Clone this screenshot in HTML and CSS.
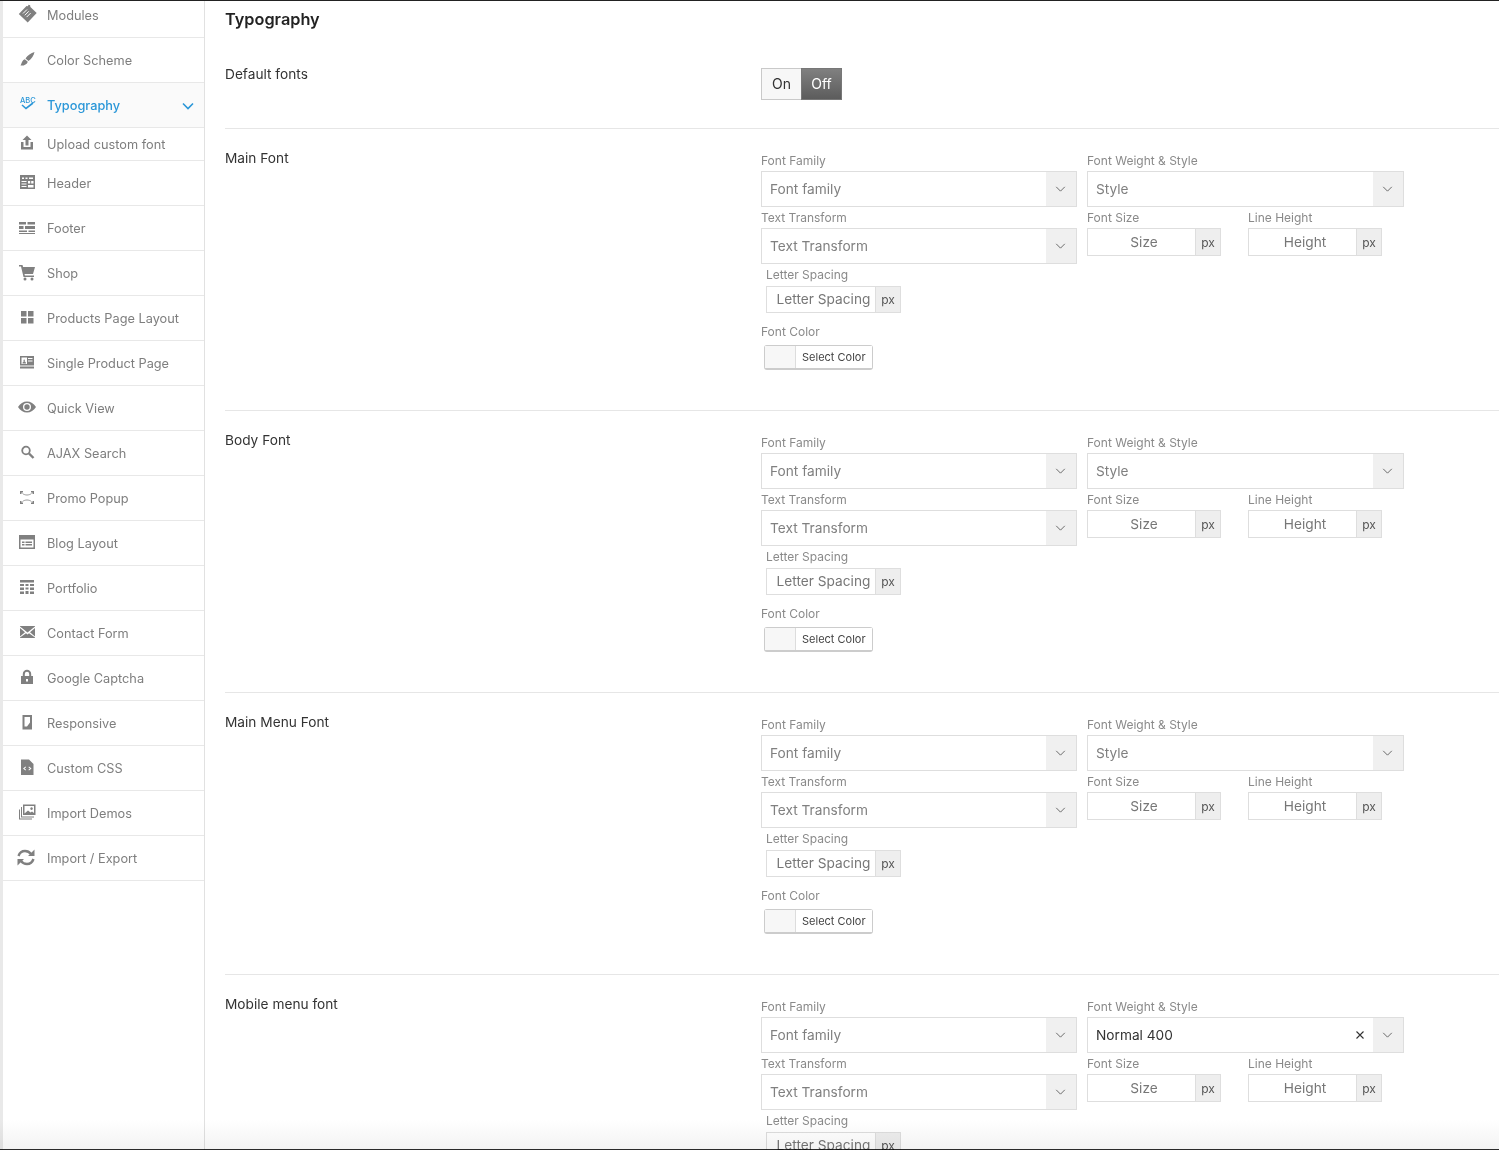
FILE: index.html
```html
<!DOCTYPE html>
<html lang="en">
  <head>
    <title>Theme Options - Typography</title>
    <meta charset="utf-8">
    <link rel="stylesheet" href="styles.css">
  </head>
  <body>
    <div class="page">

      <nav class="sidebar">
        <a class="nav-item"><svg class="nav-icon" viewBox="0 0 24 24"><path d="M3.800 11l7.700-8 1.300.3.800-1.500 1.500.5.300 1.700 6.300 6-9 9.500z"/><path class="cut" d="M8 10.500 12 6.500M9.800 12.300 13.800 8.300M11.600 14.100 15.600 10.100"/></svg>Modules</a>
        <a class="nav-item"><svg class="nav-icon" viewBox="0 0 24 24"><path d="M19.500 4C16 5 12.500 7.500 10.500 10.500L13.500 13C16.500 11 19 7.500 19.500 4zM9.800 11.200C7.500 12 7 14 6 16.500L5.500 17.500C8.500 18 12 16.500 12.800 13.700z"/></svg>Color Scheme</a>
        <a class="nav-item active"><svg class="nav-icon" viewBox="0 0 24 24"><text class="abc" x="5" y="9.500">ABC</text><path class="tick" d="M7 12l4 3.500 7-5.500"/></svg>Typography<svg class="nav-arrow" viewBox="0 0 12 8"><path d="M1 1.500l5 5 5-5"/></svg></a>
        <a class="nav-item sub"><svg class="nav-icon" viewBox="0 0 24 24"><path d="M12 3.500l4.500 4.500h-3v5.500h-3V8h-3zM6 10h2.500v5h7v-5H18v7.500H6z"/></svg>Upload custom font</a>
        <a class="nav-item"><svg class="nav-icon" viewBox="0 0 24 24"><path fill-rule="evenodd" d="M5 4h15v14H5zM7 6.500V8h2V6.500zM10.500 6.500V8h2V6.500zM14 6.500V8h4V6.500zM6.500 10v1h5v-1zM6.500 12.500v1h5v-1zM6.500 15v1h5v-1zM13 10v2.500h2.200V10zM16.200 10v2.500h2.300V10zM13 14v2.500h5.500V14z"/></svg>Header</a>
        <a class="nav-item"><svg class="nav-icon" viewBox="0 0 24 24"><path d="M4 6h7v2.500H4zM12.500 6H20v2.500h-7.500zM4 10h4.500v3H4zM10 10h10v3H10zM4 14.500h8v1.500H4zM13.500 14.500H20v1.500h-6.500zM4 17h16v1H4z"/></svg>Footer</a>
        <a class="nav-item"><svg class="nav-icon" viewBox="0 0 24 24"><path d="M4 4h3.500l.6 2H20l-2 7H9.500l.4 1.500H19V16H8.500L6 5.500H4z"/><circle cx="10" cy="18" r="1.500"/><circle cx="17" cy="18" r="1.500"/></svg>Shop</a>
        <a class="nav-item"><svg class="nav-icon" viewBox="0 0 24 24"><path d="M6 5h5.500v5.500H6zM13 5h5.500v5.500H13zM6 12h5.500v5.500H6zM13 12h5.500v5.500H13z"/></svg>Products Page Layout</a>
        <a class="nav-item"><svg class="nav-icon" viewBox="0 0 24 24"><path fill-rule="evenodd" d="M5 5h14v9.500H5zM6.500 6.500V13h5.500V6.500zM13 7v1h4.500V7zM13 9.500v1h4.500v-1z"/><path d="M7.500 12.500c0-1.500 1-2 1.500-2-.7-.4-.7-2 .2-2s.9 1.600.2 2c.6 0 1.600.5 1.600 2zM5 15.500h14v2H5z"/></svg>Single Product Page</a>
        <a class="nav-item"><svg class="nav-icon" viewBox="0 0 24 24"><path fill-rule="evenodd" d="M3 11c2-3.500 5.500-5.500 9-5.500s7 2 9 5.500c-2 3.500-5.500 5.500-9 5.500S5 14.500 3 11zm5 0a4 4 0 0 0 8 0 4 4 0 0 0-8 0z"/><circle cx="12" cy="11" r="2.700"/></svg>Quick View</a>
        <a class="nav-item"><svg class="nav-icon" viewBox="0 0 24 24"><circle class="ring" cx="11" cy="9.500" r="3.800"/><path class="ring thick" d="M14 12.500l4.500 4.500"/></svg>AJAX Search</a>
        <a class="nav-item"><svg class="nav-icon" viewBox="0 0 24 24"><path d="M5 5h3v1.500H6.500V8H5zM16 5h3v3h-1.500V6.500H16zM5 15h1.500v1.500H8V18H5zM17.500 15H19v3h-3v-1.500h1.500z"/><path class="line" d="M7.500 7.500C10 9.500 14 9.500 16.500 7.500M7.500 15.500C10 13.500 14 13.500 16.500 15.500"/></svg>Promo Popup</a>
        <a class="nav-item"><svg class="nav-icon" viewBox="0 0 24 24"><path fill-rule="evenodd" d="M4 4h16v14H4zM5.500 8.500v8h13v-8zM7 10.500h2.500V12H7zM10.500 10.500H17V12h-6.500zM7 13h2.500v1.500H7zM10.500 13H17v1.500h-6.500z"/></svg>Blog Layout</a>
        <a class="nav-item"><svg class="nav-icon" viewBox="0 0 24 24"><path d="M5 4h14v2.500H5zM5 8h4v2H5zM10.500 8h3v2h-3zM15 8h4v2h-4zM5 11.500h4v2.500H5zM10.500 11.500h3v2h-3zM15 11.500h4v2.500h-4zM5 15.500h4V18H5zM10.500 15h3v3h-3zM15 15.500h4V18h-4z"/></svg>Portfolio</a>
        <a class="nav-item"><svg class="nav-icon" viewBox="0 0 24 24"><path d="M5 5h15v.5l-7.500 6L5 5.500zM5 7l5 4.200L5 15.500zM20 7v8.500l-5-4.300zM5 16.500l6-4.300 1.500 1.200 1.500-1.200 6 4.300v.500H5z"/></svg>Contact Form</a>
        <a class="nav-item"><svg class="nav-icon" viewBox="0 0 24 24"><path fill-rule="evenodd" d="M6 10h1.800V8a4.200 4.200 0 0 1 8.400 0v2H18v8H6zm3.800 0h4.400V8a2.200 2.200 0 0 0-4.400 0zM11 13v2.500h2V13z"/></svg>Google Captcha</a>
        <a class="nav-item"><svg class="nav-icon" viewBox="0 0 24 24"><path fill-rule="evenodd" d="M7.500 4h9.500v14.500H7.500zM9.500 6v9.500h2.500l3-4V6z"/></svg>Responsive</a>
        <a class="nav-item"><svg class="nav-icon" viewBox="0 0 24 24"><path fill-rule="evenodd" d="M6 3.500h8l4.500 4.500v11H6zM10.500 10.500 8 12.500l2.500 2 .6-.7L9.500 12.500l1.600-1.300zM14 10.500l-.6.700 1.600 1.300-1.600 1.300.6.700 2.500-2z"/></svg>Custom CSS</a>
        <a class="nav-item"><svg class="nav-icon" viewBox="0 0 24 24"><path fill-rule="evenodd" d="M8 3.500h12.500V14H8zM9.500 5v7.500l3.500-3 2.500 2 1.500-1 2 1.500V5zM16.500 6.300a1.300 1.300 0 1 0 .1 0z"/><path d="M6 6h1v9.500h12v1H6zM4 8.500h1v9h12v1H4z"/></svg>Import Demos</a>
        <a class="nav-item"><svg class="nav-icon" viewBox="0 0 24 24"><path class="ring thick" d="M3.500 10c1-3 3.500-5 6.500-5 2.500 0 4.500 1 6 3M18.500 13c-1 3-3.500 5-6.500 5-2.500 0-4.500-1-6-3"/><path d="M19.500 3.500V10H13zM2.500 19.500V13H9z"/></svg>Import / Export</a>
      </nav>

      <main class="content">
        <h1 class="title">Typography</h1>

        <section class="row row-toggle">
          <h2 class="row-name">Default fonts</h2>
          <div class="toggle">
            <span class="toggle-on">On</span>
            <span class="toggle-off">Off</span>
          </div>
        </section>

        <section class="row">
          <h2 class="row-name">Main Font</h2>
          <div class="controls">
            <div class="col">
              <label class="lbl">Font Family</label>
              <div class="select"><span class="select-text">Font family</span><span class="select-arrow"><svg viewBox="0 0 12 7"><path d="M1 1l5 5 5-5"/></svg></span></div>
              <label class="lbl">Text Transform</label>
              <div class="select"><span class="select-text">Text Transform</span><span class="select-arrow"><svg viewBox="0 0 12 7"><path d="M1 1l5 5 5-5"/></svg></span></div>
              <label class="lbl lbl-spacing">Letter Spacing</label>
              <div class="unit-input spacing"><span class="unit-text">Letter Spacing</span><span class="unit">px</span></div>
              <label class="lbl lbl-color">Font Color</label>
              <div class="color-btn"><span class="swatch"></span><span class="color-text">Select Color</span></div>
            </div>
            <div class="col">
              <label class="lbl">Font Weight &amp; Style</label>
              <div class="select"><span class="select-text">Style</span><span class="select-arrow"><svg viewBox="0 0 12 7"><path d="M1 1l5 5 5-5"/></svg></span></div>
              <div class="pair">
                <div>
                  <label class="lbl">Font Size</label>
                  <div class="unit-input"><span class="unit-text">Size</span><span class="unit">px</span></div>
                </div>
                <div>
                  <label class="lbl">Line Height</label>
                  <div class="unit-input"><span class="unit-text">Height</span><span class="unit">px</span></div>
                </div>
              </div>
            </div>
          </div>
        </section>

        <section class="row">
          <h2 class="row-name">Body Font</h2>
          <div class="controls">
            <div class="col">
              <label class="lbl">Font Family</label>
              <div class="select"><span class="select-text">Font family</span><span class="select-arrow"><svg viewBox="0 0 12 7"><path d="M1 1l5 5 5-5"/></svg></span></div>
              <label class="lbl">Text Transform</label>
              <div class="select"><span class="select-text">Text Transform</span><span class="select-arrow"><svg viewBox="0 0 12 7"><path d="M1 1l5 5 5-5"/></svg></span></div>
              <label class="lbl lbl-spacing">Letter Spacing</label>
              <div class="unit-input spacing"><span class="unit-text">Letter Spacing</span><span class="unit">px</span></div>
              <label class="lbl lbl-color">Font Color</label>
              <div class="color-btn"><span class="swatch"></span><span class="color-text">Select Color</span></div>
            </div>
            <div class="col">
              <label class="lbl">Font Weight &amp; Style</label>
              <div class="select"><span class="select-text">Style</span><span class="select-arrow"><svg viewBox="0 0 12 7"><path d="M1 1l5 5 5-5"/></svg></span></div>
              <div class="pair">
                <div>
                  <label class="lbl">Font Size</label>
                  <div class="unit-input"><span class="unit-text">Size</span><span class="unit">px</span></div>
                </div>
                <div>
                  <label class="lbl">Line Height</label>
                  <div class="unit-input"><span class="unit-text">Height</span><span class="unit">px</span></div>
                </div>
              </div>
            </div>
          </div>
        </section>

        <section class="row">
          <h2 class="row-name">Main Menu Font</h2>
          <div class="controls">
            <div class="col">
              <label class="lbl">Font Family</label>
              <div class="select"><span class="select-text">Font family</span><span class="select-arrow"><svg viewBox="0 0 12 7"><path d="M1 1l5 5 5-5"/></svg></span></div>
              <label class="lbl">Text Transform</label>
              <div class="select"><span class="select-text">Text Transform</span><span class="select-arrow"><svg viewBox="0 0 12 7"><path d="M1 1l5 5 5-5"/></svg></span></div>
              <label class="lbl lbl-spacing">Letter Spacing</label>
              <div class="unit-input spacing"><span class="unit-text">Letter Spacing</span><span class="unit">px</span></div>
              <label class="lbl lbl-color">Font Color</label>
              <div class="color-btn"><span class="swatch"></span><span class="color-text">Select Color</span></div>
            </div>
            <div class="col">
              <label class="lbl">Font Weight &amp; Style</label>
              <div class="select"><span class="select-text">Style</span><span class="select-arrow"><svg viewBox="0 0 12 7"><path d="M1 1l5 5 5-5"/></svg></span></div>
              <div class="pair">
                <div>
                  <label class="lbl">Font Size</label>
                  <div class="unit-input"><span class="unit-text">Size</span><span class="unit">px</span></div>
                </div>
                <div>
                  <label class="lbl">Line Height</label>
                  <div class="unit-input"><span class="unit-text">Height</span><span class="unit">px</span></div>
                </div>
              </div>
            </div>
          </div>
        </section>

        <section class="row">
          <h2 class="row-name">Mobile menu font</h2>
          <div class="controls">
            <div class="col">
              <label class="lbl">Font Family</label>
              <div class="select"><span class="select-text">Font family</span><span class="select-arrow"><svg viewBox="0 0 12 7"><path d="M1 1l5 5 5-5"/></svg></span></div>
              <label class="lbl">Text Transform</label>
              <div class="select"><span class="select-text">Text Transform</span><span class="select-arrow"><svg viewBox="0 0 12 7"><path d="M1 1l5 5 5-5"/></svg></span></div>
              <label class="lbl lbl-spacing">Letter Spacing</label>
              <div class="unit-input spacing"><span class="unit-text">Letter Spacing</span><span class="unit">px</span></div>
              <label class="lbl lbl-color">Font Color</label>
              <div class="color-btn"><span class="swatch"></span><span class="color-text">Select Color</span></div>
            </div>
            <div class="col">
              <label class="lbl">Font Weight &amp; Style</label>
              <div class="select"><span class="select-text filled">Normal 400</span><svg class="select-clear" viewBox="0 0 8 8"><path d="M.5.5l7 7M7.500.5l-7 7"/></svg><span class="select-arrow"><svg viewBox="0 0 12 7"><path d="M1 1l5 5 5-5"/></svg></span></div>
              <div class="pair">
                <div>
                  <label class="lbl">Font Size</label>
                  <div class="unit-input"><span class="unit-text">Size</span><span class="unit">px</span></div>
                </div>
                <div>
                  <label class="lbl">Line Height</label>
                  <div class="unit-input"><span class="unit-text">Height</span><span class="unit">px</span></div>
                </div>
              </div>
            </div>
          </div>
        </section>
      </main>

    </div>
  </body>
</html>
```
FILE: styles.css
```css
* {
  box-sizing: border-box;
}

html,
body {
  height: 1150px;
  margin: 0;
  overflow: hidden;
}

body {
  background: white;
  color: #333;
  font-family: Inter, "Liberation Sans", sans-serif;
  font-size: 14px;
  position: relative;
}

/* the dark window edges and the soft fade above the lower one */
body::before {
  background: #222;
  content: "";
  height: 1px;
  left: 0;
  position: absolute;
  right: 0;
  top: 0;
  z-index: 2;
}

body::after {
  background: linear-gradient(to bottom, white, #f3f3f3 29px, #2a2a2a 29px);
  bottom: 0;
  content: "";
  height: 30px;
  left: 0;
  mix-blend-mode: multiply;
  position: absolute;
  right: 0;
  z-index: 2;
}

.page {
  display: flex;
  height: 1150px;
  overflow: hidden;
}

/* sidebar */
.sidebar {
  background: white;
  border-left: 3px solid #e9e9e9;
  border-right: 1px solid #e1e1e1;
  flex: 0 0 205px;
  margin-top: -7px;
}

.nav-item {
  align-items: center;
  border-bottom: 1px solid #e8e8e8;
  color: #7e7e7e;
  display: flex;
  font-size: 12.750px;
  height: 45px;
  padding-left: 12px;
  position: relative;
}

.nav-item.sub {
  height: 33px;
}

.nav-item.active {
  background: #fafafa;
  color: #2b97d8;
  font-weight: 500;
}

.nav-icon {
  fill: #808080;
  flex: none;
  height: 24px;
  margin-right: 8px;
  width: 24px;
}

.nav-icon .cut {
  fill: none;
  stroke: white;
  stroke-width: 1;
}

.nav-icon .line {
  fill: none;
  stroke: #808080;
  stroke-width: .8;
}

.nav-icon .ring {
  fill: none;
  stroke: #808080;
  stroke-width: 1.8;
}

.nav-icon .thick {
  stroke-width: 2.400;
}

.nav-icon .abc {
  fill: #2b97d8;
  font-size: 7.500px;
  font-weight: 500;
}

.nav-icon .tick {
  fill: none;
  stroke: #2b97d8;
  stroke-width: 1.600;
}

.nav-arrow {
  fill: none;
  height: 8px;
  margin: 2px 10px 0 auto;
  stroke: #2b97d8;
  stroke-width: 1.600;
  width: 12px;
}

/* main column */
.content {
  flex: 1;
  min-width: 0;
  padding-left: 20px;
}

.title {
  color: #222;
  font-size: 16.300px;
  font-weight: 600;
  height: 64px;
  line-height: 20px;
  margin: 0;
  padding-top: 9px;
}

.row {
  border-bottom: 1px solid #e6e6e6;
  display: flex;
  height: 282px;
  padding-top: 21px;
}

.row-toggle {
  height: 65px;
  padding-top: 0;
}

.row-name {
  color: #333;
  flex: 0 0 536px;
  font-size: 13.700px;
  font-weight: 400;
  line-height: 20px;
  margin: -2px 0 0 0;
}

.row-toggle .row-name {
  margin: 0;
}

.toggle {
  display: flex;
  height: 32px;
  margin-top: 4px;
}

.toggle-on,
.toggle-off {
  align-items: center;
  display: flex;
  font-size: 14px;
  justify-content: center;
  padding-bottom: 1px;
}

.toggle-on {
  background: #f7f7f7;
  border: 1px solid #c9c9c9;
  border-right: 0;
  color: #333;
  width: 40px;
}

.toggle-off {
  background: linear-gradient(to bottom, #808080, #5c5c5c);
  border: 1px solid #777;
  color: white;
  width: 41px;
}

.controls {
  display: flex;
  gap: 10px;
}

.col {
  width: 316px;
}

.col + .col {
  width: 317px;
}

.lbl {
  color: #8a8a8a;
  display: block;
  font-size: 12px;
  height: 21px;
  line-height: 21px;
}

.lbl-spacing {
  height: 22px;
  margin-left: 5px;
}

.lbl-color {
  height: 24px;
  margin-top: 8px;
}

.select {
  align-items: center;
  background: white;
  border: 1px solid #dedede;
  display: flex;
  height: 36px;
  padding-left: 8px;
}

.select-text {
  color: #808080;
  flex: 1;
  font-size: 13.700px;
  line-height: 20px;
}

.select-text.filled {
  color: #333;
}

.select-clear {
  fill: none;
  height: 8px;
  margin-right: 9px;
  stroke: #333;
  stroke-width: 1.100;
  width: 8px;
}

.select-arrow {
  align-items: center;
  align-self: stretch;
  background: #f0f0f0;
  display: flex;
  justify-content: center;
  width: 30px;
}

.select-arrow svg {
  fill: none;
  height: 6px;
  margin-right: 1px;
  stroke: #555;
  stroke-width: 1;
  width: 11px;
}

.pair {
  display: flex;
  gap: 27px;
}

.unit-input {
  border: 1px solid #dedede;
  display: flex;
  height: 28px;
  width: 134px;
}

.unit-input.spacing {
  height: 27px;
  margin-left: 5px;
  width: 135px;
}

.unit-text {
  color: #777;
  flex: 1;
  font-size: 13.700px;
  line-height: 26px;
  padding-left: 5px;
  text-align: center;
  white-space: nowrap;
}

.spacing .unit-text {
  line-height: 24px;
}

.unit {
  background: #eee;
  border-left: 1px solid #dedede;
  color: #555;
  flex: 0 0 25px;
  font-size: 12px;
  line-height: 27px;
  text-align: center;
}

.spacing .unit {
  line-height: 25px;
}

.color-btn {
  background: #f7f7f7;
  border: 1px solid #ccc;
  border-bottom-width: 2px;
  border-radius: 3px;
  display: flex;
  height: 25px;
  margin-left: 3px;
  width: 109px;
}

.swatch {
  background: #f7f7f7;
  border-right: 1px solid #ddd;
  flex: 0 0 31px;
}

.color-text {
  background: white;
  color: #444;
  flex: 1;
  font-size: 11px;
  line-height: 22px;
  padding-left: 6px;
  white-space: nowrap;
}
```
